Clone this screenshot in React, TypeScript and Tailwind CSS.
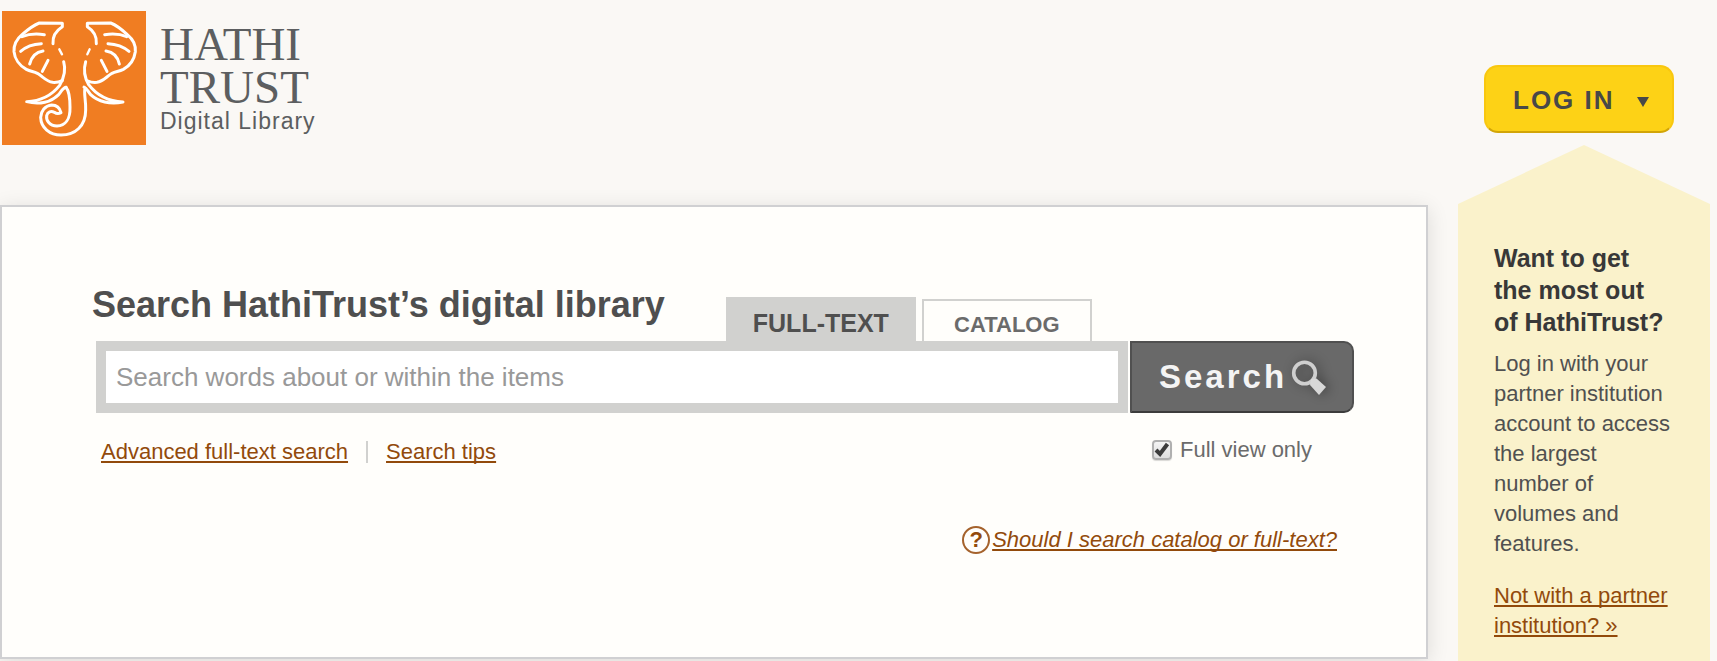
import { useState } from 'react';

const linkClass =
  'text-[#924a0b] underline decoration-2 underline-offset-2 [text-decoration-skip-ink:none]';

function ElephantMark() {
  return (
    <svg
      viewBox="6 33 432 402"
      className="h-[134px] w-36 shrink-0 bg-[#f07d22]"
      fill="none"
      stroke="#fff"
      strokeWidth="9"
      strokeLinejoin="round"
      strokeLinecap="round"
      aria-hidden="true"
    >
      {/* left ear */}
      <path d="M159 131C157 108 168 92 187 80V70L118 69C102 75 82 90 66 104C48 119 41 136 42 155C44 176 58 197 79 208C93 215 101 214 112 220C130 231 139 244 158 247C170 248 178 246 187 242" />
      <path d="M66 110C88 101 112 101 133 104M62 154C80 138 103 132 124 131M89 192C95 169 109 156 129 153M127 214L144 181" />
      <path d="M178 148L186 163" strokeWidth="7" />
      {/* right ear */}
      <path d="M289 131C291 108 281 92 262 80V70L332 69C350 76 365 88 382 104C400 119 408 136 406 155C403 176 390 197 370 208C356 215 347 214 336 220C318 231 309 244 291 247C280 248 272 247 264 243" />
      <path d="M380 110C359 101 336 101 314 104M387 154C368 138 346 132 324 131M358 192C353 169 338 156 318 153M321 214L304 181" />
      <path d="M269 148L262 163" strokeWidth="7" />
      {/* tusks */}
      <path d="M191 185C198 209 194 230 179 256C157 284 124 303 80 305C119 315 154 306 176 284C184 274 188 264 198 262" />
      <path d="M257 185C250 209 252 230 266 254C290 286 326 304 369 306C330 314 294 305 272 284C264 275 261 265 252 261" />
      {/* trunk */}
      <path d="M198 262C208 274 210 300 210 322C211 357 196 377 171 378C148 377 138 361 140 347C143 335 153 332 163 337C170 342 176 342 183 338C179 322 168 315 155 315C135 317 123 333 122 352C123 383 149 405 183 405C226 405 257 378 257 330C258 300 251 282 255 264" />
    </svg>
  );
}

function Logo() {
  return (
    <a href="#" className="flex items-start pl-0.5 text-[#5c5e60]">
      <ElephantMark />
      <span className="flex flex-col pt-3 pl-3.5">
        <span className="font-['Liberation_Serif',serif] text-[47px] leading-[43px]">HATHI</span>
        <span className="font-['Liberation_Serif',serif] text-[47px] leading-[43px]">TRUST</span>
        <span className="text-[23px] leading-6 tracking-[1px]">Digital Library</span>
      </span>
    </a>
  );
}

function MagnifierIcon() {
  return (
    <svg
      viewBox="0 0 36 36"
      className="size-9 shrink-0 drop-shadow-[3px_0_6px_rgba(0,0,0,0.4)]"
      fill="none"
      aria-hidden="true"
    >
      <circle cx="13.5" cy="14" r="10.8" stroke="#cfcfcf" strokeWidth="3.6" />
      <path d="M19 26L20 20L25.5 19.5L35 28L28 36Z" fill="#d8d8d8" />
    </svg>
  );
}

function SearchPanel() {
  const [query, setQuery] = useState('');
  const [fullView, setFullView] = useState(true);

  return (
    <main className="border-2 border-[#d0d0d2] bg-[#fffefb] pt-[77px] pr-[72px] pb-[102px] pl-[90px] shadow-[0_4px_20px_rgba(0,0,0,0.12)]">
      <div className="flex items-end">
        <h1 className="mb-4 pr-[61px] text-4xl leading-[41px] font-bold text-[#4f4f4f]">
          Search HathiTrust’s digital library
        </h1>
        <div className="flex items-end gap-1.5" role="tablist">
          <button
            role="tab"
            aria-selected="true"
            className="h-11 w-[190px] bg-[#d1d1cf] pt-2 text-[25px] leading-8 font-bold text-[#4f4f4f]"
          >
            FULL-TEXT
          </button>
          <button
            role="tab"
            aria-selected="false"
            className="h-[42px] w-[170px] border-2 border-b-0 border-[#d1d1cf] pt-2 text-[22px] leading-8 font-bold text-[#6b6b6b]"
          >
            CATALOG
          </button>
        </div>
      </div>

      <form className="ml-1" onSubmit={(e) => e.preventDefault()}>
        <div className="flex gap-0.5">
          <input
            type="text"
            aria-label="Search"
            value={query}
            onChange={(e) => setQuery(e.target.value)}
            placeholder="Search words about or within the items"
            className="h-[72px] min-w-0 flex-1 border-10 border-[#d1d1cf] bg-white px-2.5 text-[26px] text-[#4f4f4f] placeholder:text-[#999]"
          />
          <button
            type="submit"
            className="flex h-[72px] w-56 items-center gap-1 rounded-r-[10px] border-2 border-[#505050] border-b-[#3c3c3c] bg-[#696969] pl-[27px] text-[33px] font-bold tracking-[3px] text-[#f4f4f4]"
          >
            Search
            <MagnifierIcon />
          </button>
        </div>

        <div className="mt-[22px] flex items-start justify-between pr-[42px] pl-[5px] text-[22px] leading-[30px]">
          <div className="flex items-center pt-0.5">
            <a href="#" className={linkClass}>
              Advanced full-text search
            </a>
            <span className="mx-[18px] h-[22px] w-0.5 bg-[#d1d1cf]" />
            <a href="#" className={linkClass}>
              Search tips
            </a>
          </div>
          <label className="flex items-center gap-2 text-[#6b6b6b]">
            <span className="grid">
              <input
                type="checkbox"
                checked={fullView}
                onChange={(e) => setFullView(e.target.checked)}
                className="col-start-1 row-start-1 size-5 appearance-none rounded border-2 border-[#b0b0b0] bg-linear-to-b from-[#f4f4f4] to-[#dedede] shadow-[0_1px_1px_rgba(0,0,0,0.15)]"
              />
              {fullView && (
                <svg
                  viewBox="0 0 20 20"
                  className="pointer-events-none col-start-1 row-start-1 size-5"
                  fill="none"
                  stroke="#3c3c3c"
                  strokeWidth="4"
                  aria-hidden="true"
                >
                  <path d="M4 10L8 14L15.5 4" />
                </svg>
              )}
            </span>
            Full view only
          </label>
        </div>
      </form>

      <div className="mt-[58px] flex justify-end pr-[17px] text-[22px] leading-[30px]">
        <a href="#" className="flex items-center gap-0.5 text-[#924a0b]">
          <span className="flex size-7 items-center justify-center rounded-full border-2 border-[#a5622c] text-[22px] leading-6 font-bold">
            ?
          </span>
          <span className={`${linkClass} italic`}>Should I search catalog or full-text?</span>
        </a>
      </div>
    </main>
  );
}

function LoginPromo() {
  return (
    <aside className="flex-1 bg-[#faf2cb] pt-[97px] pr-[38px] pl-9 [clip-path:polygon(50%_0,100%_59px,100%_100%,0_100%,0_59px)]">
      <h2 className="text-[25px] leading-8 font-bold text-[#383838]">
        Want to get the most out of HathiTrust?
      </h2>
      <p className="mt-[11px] text-[22px] leading-[30px] text-[#505050]">
        Log in with your partner institution account to access the largest number of volumes and
        features.
      </p>
      <p className="mt-[22px] text-[22px] leading-[30px]">
        <a href="#" className={linkClass}>
          Not with a partner institution? »
        </a>
      </p>
    </aside>
  );
}

export default function App() {
  return (
    <div className="grid min-h-screen grid-cols-[minmax(0,1fr)_252px] gap-x-[30px] bg-[#faf8f5] pr-[7px] font-['Liberation_Sans',Arial,sans-serif]">
      <div>
        <header className="pt-[11px] pb-[60px]">
          <Logo />
        </header>
        <SearchPanel />
      </div>
      <div className="flex flex-col pt-[65px]">
        <button className="mb-3 ml-[26px] flex h-[68px] w-[190px] items-center justify-between rounded-[14px] border-2 border-[#f9c70f] border-b-[#d2a507] bg-[#fdd216] pt-0.5 pr-[23px] pl-[27px] text-[26px] font-bold tracking-[2px] text-[#484848]">
          LOG IN
          <svg viewBox="0 0 12 12" className="mt-1 size-3" fill="currentColor" aria-hidden="true">
            <path d="M0 1H12L6 11Z" />
          </svg>
        </button>
        <LoginPromo />
      </div>
    </div>
  );
}
